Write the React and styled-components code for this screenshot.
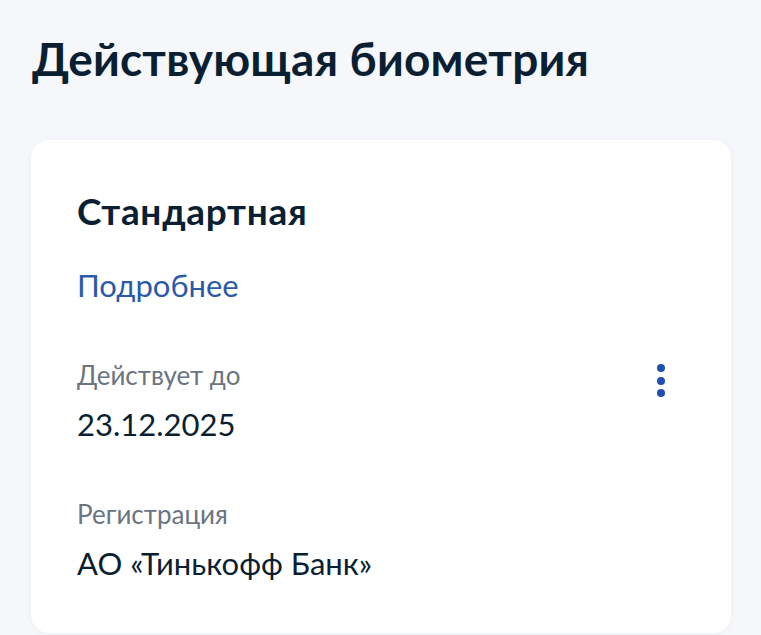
import styled, { createGlobalStyle } from 'styled-components';

const GlobalStyle = createGlobalStyle`
  html, body {
    margin: 0;
    padding: 0;
    background: #f5f7fb;
    font-family: Lato, "Noto Sans", "Liberation Sans", sans-serif;
    color: #0b1f33;
  }
`;

const Page = styled.div`
  width: 761px;
  height: 635px;
  overflow: hidden;
  padding: 31px 30px 0 31px;
  box-sizing: border-box;
`;

const Title = styled.h1`
  margin: 0 0 0 1px;
  font-size: 46px;
  line-height: 56px;
  font-weight: 700;
  letter-spacing: 0.2px;
`;

const Card = styled.section`
  margin-top: 53px;
  width: 700px;
  height: 493px;
  background: #fff;
  border-radius: 18px;
  padding: 49px 48px 0 46px;
  box-sizing: border-box;
  box-shadow: 0 1px 6px rgba(11, 31, 51, 0.04);
`;

const CardTitle = styled.h2`
  margin: 0;
  font-size: 37px;
  line-height: 44px;
  font-weight: 700;
  letter-spacing: 0.7px;
`;

const Link = styled.a`
  display: block;
  width: max-content;
  margin-top: 34px;
  font-size: 31px;
  line-height: 36px;
  color: #2b5aa8;
  text-decoration: none;
`;

const Row = styled.div`
  display: flex;
  justify-content: space-between;
  align-items: flex-start;
  margin-top: ${p => p.$gap}px;
`;

const Field = styled.div`
  display: flex;
  flex-direction: column;
  gap: 14px;
`;

const Label = styled.span`
  font-size: 26px;
  line-height: 32px;
  color: #6b7581;
`;

const Value = styled.span`
  font-size: 31px;
  line-height: 38px;
  color: #0b1f33;
`;

const MenuButton = styled.button`
  border: none;
  background: none;
  padding: 0;
  margin: 5px 18px 0 0;
  display: flex;
  flex-direction: column;
  gap: 4.5px;
  cursor: pointer;

  span {
    width: 8px;
    height: 8px;
    border-radius: 50%;
    background: #214fb3;
  }
`;

export default function App() {
  return (
    <>
      <GlobalStyle />
      <Page>
        <Title>Действующая биометрия</Title>
        <Card>
          <CardTitle>Стандартная</CardTitle>
          <Link href="#">Подробнее</Link>
          <Row $gap={56}>
            <Field>
              <Label>Действует до</Label>
              <Value>23.12.2025</Value>
            </Field>
            <MenuButton aria-label="Ещё">
              <span /><span /><span />
            </MenuButton>
          </Row>
          <Row $gap={55}>
            <Field>
              <Label>Регистрация</Label>
              <Value>АО «Тинькофф Банк»</Value>
            </Field>
          </Row>
        </Card>
      </Page>
    </>
  );
}
